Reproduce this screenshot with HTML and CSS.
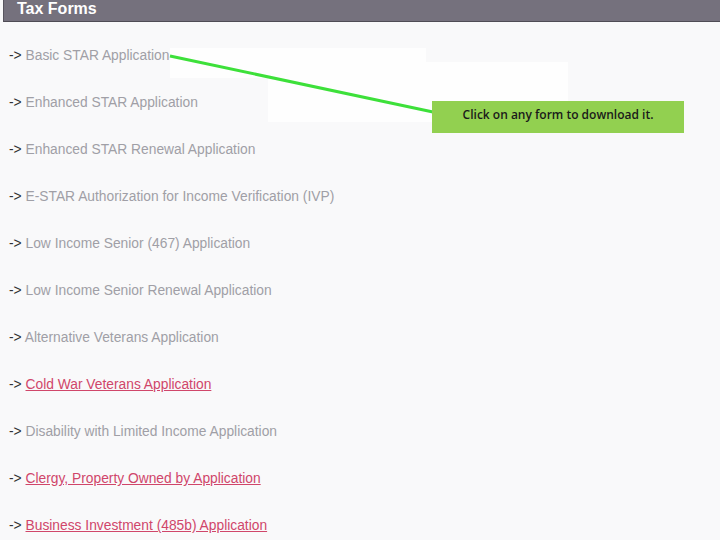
FILE: index.html
```html
<!DOCTYPE html>
<html lang="en">
<head>
<meta charset="UTF-8">
<title>Tax Forms</title>
<link rel="stylesheet" href="styles.css">
</head>
<body>
<div id="page">
    <div id="header">Tax Forms</div>

    <div class="patch patch-a"></div>
    <div class="patch patch-b"></div>

    <ul id="forms">
        <li>-&gt; <a href="#">Basic STAR Application</a></li>
        <li>-&gt; <a href="#">Enhanced STAR Application</a></li>
        <li>-&gt; <a href="#">Enhanced STAR Renewal Application</a></li>
        <li>-&gt; <a href="#">E-STAR Authorization for Income Verification (IVP)</a></li>
        <li>-&gt; <a href="#">Low Income Senior (467) Application</a></li>
        <li>-&gt; <a href="#">Low Income Senior Renewal Application</a></li>
        <li>-&gt; <a href="#">Alternative Veterans Application</a></li>
        <li>-&gt; <a href="#" class="new">Cold War Veterans Application</a></li>
        <li>-&gt; <a href="#">Disability with Limited Income Application</a></li>
        <li>-&gt; <a href="#" class="new">Clergy, Property Owned by Application</a></li>
        <li>-&gt; <a href="#" class="new">Business Investment (485b) Application</a></li>
    </ul>

    <!-- flecha hacia el primer formulario -->
    <svg class="pointer" width="720" height="540" viewBox="0 0 720 540">
        <line x1="170" y1="56" x2="433" y2="112" stroke="#3de03a" stroke-width="3"/>
    </svg>
    <div class="callout">Click on any form to download it.</div>
</div>
</body>
</html>
```

FILE: styles.css
```css
/* Estilos generales */
body {
    margin: 0;
    background-color: #f9f9fa;
    font-family: "Liberation Sans", Arial, sans-serif;
}

#page {
    position: relative;
    width: 720px;
    height: 540px;
    overflow: hidden;
}

#header {
    margin-left: 3px;
    height: 21px;
    padding-left: 13px;
    background-color: #75717d;
    border-left: 1px solid #58555f;
    border-bottom: 1px solid #4f4c55;
    color: #fff;
    font-weight: bold;
    font-size: 16px;
    line-height: 17px;
}

#forms {
    list-style: none;
    margin: 10px 0 0 0;
    padding: 0 0 0 9px;
    position: relative;
}

#forms li {
    height: 47px;
    line-height: 47px;
    font-size: 13.8px;
    color: #333;
}

#forms a {
    color: #a09fa6;
    text-decoration: none;
}

#forms a.new {
    color: #d0466a;
    text-decoration: underline;
}

.patch {
    position: absolute;
    background-color: #fefefe;
}

.patch-a {
    left: 170px;
    top: 48px;
    width: 256px;
    height: 30px;
}

.patch-b {
    left: 268px;
    top: 62px;
    width: 300px;
    height: 60px;
}

.pointer {
    position: absolute;
    left: 0;
    top: 0;
}

.callout {
    position: absolute;
    left: 432px;
    top: 101px;
    width: 252px;
    height: 32px;
    line-height: 28px;
    background-color: #92d050;
    color: #1a1a1a;
    text-align: center;
    font-family: "Open Sans", sans-serif;
    font-size: 12px;
    font-weight: 600;
}
```
